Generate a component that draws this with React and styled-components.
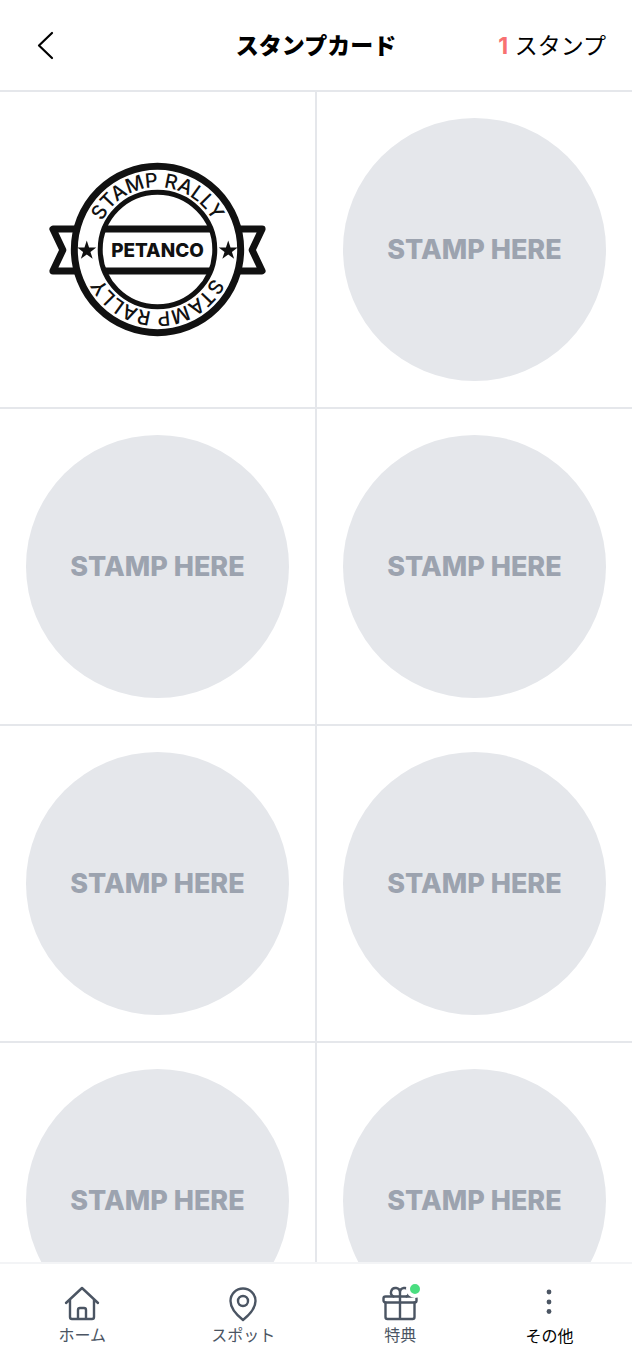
import React from "react";
import styled, { createGlobalStyle } from "styled-components";

const GlobalStyle = createGlobalStyle`
  * {
    box-sizing: border-box;
  }
  body {
    margin: 0;
    background: #fff;
    color: #000;
    font-family: Inter, "Noto Sans CJK JP", sans-serif;
  }
`;

// Stamp drawing
const PetancoStamp = () => (
  <Drawing viewBox="0 0 264 264" role="img" aria-label="PETANCO STAMP RALLY">
    <defs>
      <path id="arc-top" d="M69.500 132a62.500 62.500 0 0 1 125 0" />
      <path id="arc-bottom" d="M194.500 132a62.500 62.500 0 0 1 -125 0" />
      <path
        id="star"
        d="M0-10L2.300-3.100L9.500-3L3.700 1.400L5.900 8.300L0 4.100L-5.900 8.300L-3.700 1.400L-9.500-3L-2.300-3.100Z"
      />
    </defs>
    <g fill="#fff" stroke="#111" strokeWidth="7" strokeLinejoin="round">
      <path d="M27 111.500H237L227 132.500L237 153.500H27L37 132.500Z" />
      <circle cx="132" cy="132" r="83.500" />
      <path d="M79 111.500H185M79 153.500H185" />
      <circle cx="132" cy="132" r="57.500" fill="none" strokeWidth="5" />
    </g>
    <g fill="#111">
      <use href="#star" x="61" y="133" />
      <use href="#star" x="203" y="133" />
    </g>
    <g fill="#111" textAnchor="middle">
      <text x="132" y="139.500" fontSize="19" fontWeight="800">
        PETANCO
      </text>
      <text fontSize="20" fontWeight="500">
        <textPath href="#arc-top" startOffset="50%">
          STAMP RALLY
        </textPath>
      </text>
      <text fontSize="20" fontWeight="500">
        <textPath href="#arc-bottom" startOffset="50%">
          STAMP RALLY
        </textPath>
      </text>
    </g>
  </Drawing>
);

const HomeIcon = () => (
  <Icon viewBox="0 0 40 40">
    <path d="M4 19L20 4L36 19M8 16V33a2 2 0 0 0 2 2H30a2 2 0 0 0 2-2V16M16 35V26a2 2 0 0 1 2-2H22a2 2 0 0 1 2 2V35" />
  </Icon>
);

const SpotIcon = () => (
  <Icon viewBox="0 0 40 40">
    <path d="M20 36C15 32 7.500 25 7.500 17a12.500 12.500 0 0 1 25 0C32.500 25 25 32 20 36Z" />
    <circle cx="20" cy="17" r="5" />
  </Icon>
);

const GiftIcon = () => (
  <Icon viewBox="0 0 40 40">
    <rect x="3.500" y="12.500" width="33" height="6" rx="2" />
    <path d="M5.500 18.500V33a2 2 0 0 0 2 2H32.500a2 2 0 0 0 2-2V18.500M20 12V35" />
    <path d="M20 12.500V8.500a4.500 4.500 0 1 0-6.500 4M20 12.500V8.500a4.500 4.500 0 1 1 6.500 4" />
  </Icon>
);

const MoreIcon = () => (
  <Icon viewBox="0 0 40 40">
    <g fill="#4b5563" stroke="none">
      <circle cx="20" cy="8" r="2.400" />
      <circle cx="20" cy="18" r="2.400" />
      <circle cx="20" cy="27.500" r="2.400" />
    </g>
  </Icon>
);

const spots = [true, false, false, false, false, false, false, false];

const App = () => {
  return (
    <Page>
      <GlobalStyle />
      <Header>
        <BackButton type="button" aria-label="戻る">
          <svg width="40" height="40" viewBox="0 0 40 40" fill="none" stroke="#000" strokeWidth="2.200" strokeLinecap="round" strokeLinejoin="round">
            <path d="M26 7L13 19.500L26 32" />
          </svg>
        </BackButton>
        <Title>スタンプカード</Title>
        <Count>
          <strong>1</strong> スタンプ
        </Count>
      </Header>
      <Card>
        {spots.map((stamped, i) => (
          <Cell key={i}>
            {stamped ? <PetancoStamp /> : <EmptyStamp>STAMP HERE</EmptyStamp>}
          </Cell>
        ))}
      </Card>
      <Nav>
        <NavLink href="#home">
          <HomeIcon />
          ホーム
        </NavLink>
        <NavLink href="#spot">
          <SpotIcon />
          スポット
        </NavLink>
        <NavLink href="#reward">
          <IconWrap>
            <GiftIcon />
            <Dot />
          </IconWrap>
          特典
        </NavLink>
        <NavButton type="button">
          <MoreIcon />
          その他
        </NavButton>
      </Nav>
    </Page>
  );
};

export default App;

const Page = styled.div`
  height: 100vh;
  display: flex;
  flex-direction: column;
`;

const Header = styled.header`
  display: grid;
  grid-template-columns: 1fr auto 1fr;
  align-items: center;
  flex-shrink: 0;
  padding: 26px 26px 24px;
  border-bottom: 2px solid #e5e7eb;
`;

const BackButton = styled.button`
  justify-self: start;
  display: flex;
  padding: 0;
  border: none;
  background: none;
`;

const Title = styled.h1`
  margin: 0;
  font-size: 23px;
  line-height: 32px;
  font-weight: 900;
`;

const Count = styled.p`
  margin: 0;
  justify-self: end;
  font-size: 23px;
  line-height: 32px;
  strong {
    color: #f87171;
  }
`;

const Card = styled.main`
  flex: 1;
  min-height: 0;
  overflow: hidden;
  display: grid;
  grid-template-columns: 1fr 1fr;
  align-content: start;
  gap: 2px;
  background: #e5e7eb;
`;

const Cell = styled.div`
  aspect-ratio: 1;
  padding: 26px;
  background: #fff;
`;

const EmptyStamp = styled.div`
  height: 100%;
  display: flex;
  align-items: center;
  justify-content: center;
  border-radius: 50%;
  background: #e5e7eb;
  color: #9ca3af;
  font-size: 27px;
  font-weight: 800;
`;

const Drawing = styled.svg`
  display: block;
  width: 100%;
  height: 100%;
`;

const Nav = styled.nav`
  flex-shrink: 0;
  display: flex;
  align-items: flex-start;
  justify-content: space-around;
  padding: 20px 6px 20px;
  border-top: 2px solid #f3f4f6;
`;

const NavLink = styled.a`
  display: flex;
  flex-direction: column;
  align-items: center;
  color: #4b5563;
  font-size: 16px;
  line-height: 22px;
  text-decoration: none;
`;

const NavButton = styled(NavLink).attrs({ as: "button" })`
  padding: 0;
  border: none;
  background: none;
  color: #000;
  font-family: inherit;
  line-height: 24px;
`;

const IconWrap = styled.span`
  position: relative;
  display: flex;
`;

const Dot = styled.span`
  position: absolute;
  top: -4px;
  right: -4px;
  width: 18px;
  height: 18px;
  border: 4px solid #fff;
  border-radius: 50%;
  background: #4ade80;
`;

const Icon = styled.svg`
  width: 40px;
  height: 40px;
  fill: none;
  stroke: #4b5563;
  stroke-width: 2.4;
  stroke-linecap: round;
  stroke-linejoin: round;
`;
